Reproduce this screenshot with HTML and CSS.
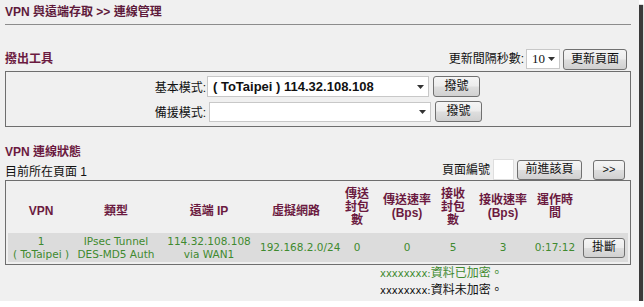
FILE: index.html
```html
<!DOCTYPE html>
<html lang="zh-Hant">
<head>
  <meta charset="UTF-8" />
  <title>VPN 與遠端存取 &gt;&gt; 連線管理</title>
  <link rel="stylesheet" href="styles.css">
</head>
<body>
  <div class="page">
    <h1 class="title">VPN 與遠端存取 &gt;&gt; 連線管理</h1>

    <div class="bar">
      <h2 class="heading">撥出工具</h2>
      <div class="controls">
        <span class="label">更新間隔秒數:</span>
        <div class="select select-small">
          <span class="sel-num">10</span>
          <svg class="arrow" width="7" height="4" viewBox="0 0 7 4"><polygon points="0,0 7,0 3.5,4" fill="#333"/></svg>
        </div>
        <button class="btn btn-refresh">更新頁面</button>
      </div>
    </div>

    <div class="panel dial">
      <div class="dial-row">
        <span class="dial-label">基本模式:</span>
        <div class="select select-wide">
          <span class="sel-text">( ToTaipei ) 114.32.108.108</span>
          <svg class="arrow" width="7" height="4" viewBox="0 0 7 4"><polygon points="0,0 7,0 3.5,4" fill="#333"/></svg>
        </div>
        <button class="btn btn-dial">撥號</button>
      </div>
      <div class="dial-row backup">
        <span class="dial-label">備援模式:</span>
        <div class="select select-wide">
          <span class="sel-text"></span>
          <svg class="arrow" width="7" height="4" viewBox="0 0 7 4"><polygon points="0,0 7,0 3.5,4" fill="#333"/></svg>
        </div>
        <button class="btn btn-dial">撥號</button>
      </div>
    </div>

    <h2 class="heading status-title">VPN 連線狀態</h2>
    <div class="pager-row">
      <span class="current">目前所在頁面 1</span>
      <div class="pager">
        <span class="label">頁面編號</span>
        <span class="page-input"></span>
        <button class="btn btn-go">前進該頁</button>
        <button class="btn btn-next">&gt;&gt;</button>
      </div>
    </div>

    <div class="panel conn">
      <table class="conn-table">
        <colgroup>
          <col style="width:66px"><col style="width:84px"><col style="width:102px"><col style="width:72px">
          <col style="width:50px"><col style="width:50px"><col style="width:42px"><col style="width:58px">
          <col style="width:46px"><col style="width:50px">
        </colgroup>
        <thead>
          <tr>
            <th class="single">VPN</th>
            <th class="single">類型</th>
            <th class="single">遠端 IP</th>
            <th class="single">虛擬網路</th>
            <th>傳送<br>封包<br>數</th>
            <th>傳送速率<br>(Bps)</th>
            <th>接收<br>封包<br>數</th>
            <th>接收速率<br>(Bps)</th>
            <th>運作時<br>間</th>
            <th></th>
          </tr>
        </thead>
        <tbody>
          <tr class="data">
            <td>1<br>( ToTaipei )</td>
            <td>IPsec Tunnel<br>DES-MD5 Auth</td>
            <td>114.32.108.108<br>via WAN1</td>
            <td>192.168.2.0/24</td>
            <td>0</td>
            <td>0</td>
            <td>5</td>
            <td>3</td>
            <td>0:17:12</td>
            <td class="action"><button class="btn btn-hang">掛斷</button></td>
          </tr>
        </tbody>
      </table>
    </div>

    <div class="legend">
      <div class="enc"><span class="code">xxxxxxxx:</span>資料已加密。</div>
      <div class="plain"><span class="code">xxxxxxxx:</span>資料未加密。</div>
    </div>
  </div>
</body>
</html>
```

FILE: styles.css
```css
* {
  box-sizing: border-box;
}

body {
  margin: 0;
  background: #fff;
  font-family: "Liberation Sans", "Noto Sans CJK TC", sans-serif;
  font-size: 12px;
  color: #111;
}

.page {
  width: 639px;
  height: 301px;
  background: #f0f0f0;
  padding: 0 8px 0 5px;
  box-shadow: 4px 5px 1px #3a3a3a;
}

.title {
  margin: 0;
  height: 25px;
  padding-top: 4px;
  line-height: 16px;
  font-size: 12px;
  font-weight: bold;
  color: #5e1a3b;
  border-bottom: 1px solid #8c8c8c;
}

.heading {
  margin: 0;
  font-size: 12px;
  line-height: 14px;
  font-weight: bold;
  color: #6b1a40;
}

.bar {
  display: flex;
  justify-content: space-between;
  align-items: center;
  height: 22px;
  margin-top: 23px;
}

.controls {
  display: flex;
  align-items: center;
  margin-right: 4px;
}

.label {
  line-height: 16px;
}

.select {
  display: flex;
  align-items: center;
  justify-content: space-between;
  background: #fff;
  border: 1px solid #c8c8c8;
  padding: 0 4px 0 5px;
}

.select-small {
  width: 34px;
  height: 20px;
  margin: 0 2px 0 2px;
}

.sel-num {
  font-family: "Liberation Serif", serif;
  font-size: 13px;
}

.select-wide {
  width: 222px;
  height: 21px;
  margin-left: 1px;
}

.sel-text {
  font-size: 13px;
  font-weight: bold;
  color: #111;
}

.btn {
  height: 21px;
  padding: 0;
  border: 1px solid #707070;
  border-radius: 3px;
  background: linear-gradient(#f5f5f5 0%, #ececec 48%, #dedede 52%, #d0d0d0 100%);
  font-family: "Liberation Sans", "Noto Sans CJK TC", sans-serif;
  font-size: 12px;
  line-height: 17px;
  color: #111;
}

.btn-refresh {
  width: 64px;
  margin-left: 1px;
}

.panel {
  border: 1px solid #6e6e6e;
}

.dial {
  margin-top: 1px;
  padding: 4px 0;
  display: flex;
  flex-direction: column;
  gap: 4px;
}

.dial-row {
  display: flex;
  align-items: center;
  height: 21px;
}

.dial-label {
  width: 200px;
  text-align: right;
}

.backup .select-wide {
  margin-left: 3px;
  height: 20px;
}

.btn-dial {
  width: 47px;
  margin-left: 4px;
}

.status-title {
  margin-top: 18px;
}

.pager-row {
  display: flex;
  justify-content: space-between;
  height: 21px;
}

.current {
  align-self: flex-end;
  line-height: 16px;
}

.pager {
  display: flex;
  align-items: center;
  margin-right: 6px;
}

.page-input {
  width: 21px;
  height: 21px;
  margin: 0 3px;
  background: #fff;
  border: 1px solid #dedede;
}

.btn-go {
  width: 65px;
  height: 20px;
}

.btn-next {
  width: 32px;
  height: 20px;
  margin-left: 11px;
  font-size: 11px;
}

.conn {
  padding: 0 2px 2px;
}

.conn-table {
  width: 620px;
  border-collapse: collapse;
  table-layout: fixed;
}

.conn-table th {
  height: 52px;
  padding: 0;
  font-size: 12px;
  line-height: 13px;
  font-weight: bold;
  color: #6b1a40;
  text-align: center;
  vertical-align: middle;
}

.conn-table th.single {
  padding-top: 8px;
}

.data td {
  height: 29px;
  padding: 0;
  background: #dcdcdc;
  font-family: "DejaVu Sans", "Noto Sans CJK TC", sans-serif;
  font-size: 10.5px;
  line-height: 13px;
  color: #3f8a2f;
  text-align: center;
  vertical-align: middle;
  white-space: nowrap;
}

.data td.action {
  text-align: left;
}

.btn-hang {
  width: 42px;
  height: 20px;
  margin-left: 5px;
}

.legend {
  padding-left: 375px;
  line-height: 17px;
}

.legend .code {
  font-family: "DejaVu Sans", sans-serif;
  font-size: 10px;
}

.enc {
  color: #3f8a2f;
}

.plain {
  color: #111;
}
```
